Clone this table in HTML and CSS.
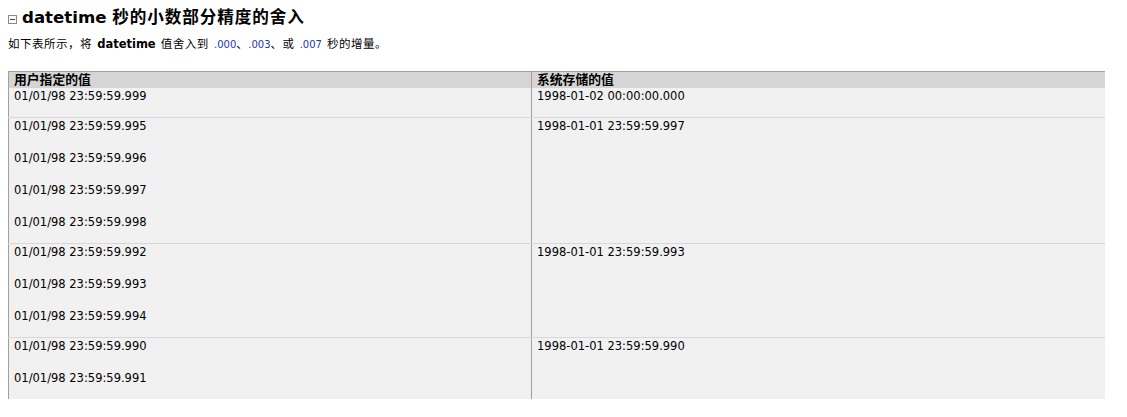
FILE: index.html
```html
<!DOCTYPE html>
<html lang="zh-CN">
<head>
<meta charset="utf-8">
<title>datetime 秒的小数部分精度的舍入</title>
<link rel="stylesheet" href="styles.css">
</head>
<body>
<div class="section-head">
  <span class="toggle" aria-hidden="true"><svg width="9" height="9" viewBox="0 0 9 9"><rect x="0.5" y="0.5" width="8" height="8" fill="#fff" stroke="#8a8a8a"/><rect x="2" y="4" width="5" height="1" fill="#444"/></svg></span>
  <h3 class="title"><span class="kw">datetime</span> <span class="cjk">秒的小数部分精度的舍入</span></h3>
</div>
<p class="intro">如下表所示，将 <b class="kw">datetime</b> 值舍入到 <span class="lit">.000</span>、<span class="lit">.003</span>、或 <span class="lit">.007</span> 秒的增量。</p>
<table class="grid">
  <colgroup><col class="c1"><col class="c2"></colgroup>
  <thead>
    <tr><th>用户指定的值</th><th>系统存储的值</th></tr>
  </thead>
  <tbody>
    <tr>
      <td><p>01/01/98 23:59:59.999</p></td>
      <td><p>1998-01-02 00:00:00.000</p></td>
    </tr>
    <tr>
      <td><p>01/01/98 23:59:59.995</p><p>01/01/98 23:59:59.996</p><p>01/01/98 23:59:59.997</p><p>01/01/98 23:59:59.998</p></td>
      <td><p>1998-01-01 23:59:59.997</p></td>
    </tr>
    <tr>
      <td><p>01/01/98 23:59:59.992</p><p>01/01/98 23:59:59.993</p><p>01/01/98 23:59:59.994</p></td>
      <td><p>1998-01-01 23:59:59.993</p></td>
    </tr>
    <tr>
      <td><p>01/01/98 23:59:59.990</p><p>01/01/98 23:59:59.991</p></td>
      <td><p>1998-01-01 23:59:59.990</p></td>
    </tr>
  </tbody>
</table>
</body>
</html>
```
FILE: styles.css
```css
html, body {
  background: #ffffff;
}
body {
  margin: 8px;
  color: #000;
  font-family: "DejaVu Sans", Verdana, "Noto Sans CJK SC", sans-serif;
  font-size: 11.5px;
}
.section-head {
  display: flex;
  align-items: center;
  gap: 5px;
  height: 20px;
}
.toggle {
  display: flex;
  width: 9px;
  height: 9px;
  margin-top: 2px;
}
.title {
  margin: 0;
  font-size: 16.6px;
  font-weight: bold;
  line-height: 20px;
  white-space: nowrap;
}
.title .cjk {
  letter-spacing: 0.9px;
}
.intro {
  margin: 8px 0 0;
  height: 16px;
  line-height: 16px;
  white-space: nowrap;
  letter-spacing: 0.5px;
  word-spacing: 1px;
}
.intro .kw {
  font-weight: bold;
  letter-spacing: 0;
}
.lit {
  color: #1c36b4;
  font-size: 10px;
  line-height: 1;
  letter-spacing: 0;
}
.grid {
  margin-top: 19px;
  border-collapse: collapse;
  table-layout: fixed;
  width: 1096px;
  border-top: 1px solid #a0a0a0;
}
.c1 { width: 523px; }
.c2 { width: 573px; }
.grid th {
  background: #d5d5d5;
  text-align: left;
  font-weight: bold;
  font-size: 12.8px;
  line-height: 16px;
  height: 16px;
  padding: 0 5px;
  border-left: 1px solid #a0a0a0;
  vertical-align: middle;
}
.grid td {
  background: #f1f1f1;
  vertical-align: top;
  padding: 0 5px 13px;
  border-left: 1px solid #a0a0a0;
  border-bottom: 1px solid #d8d8d8;
}
.grid tbody tr:last-child td {
  border-bottom: none;
}
.grid td p {
  margin: 0;
  line-height: 16px;
}
.grid td p + p {
  margin-top: 16px;
}
```
